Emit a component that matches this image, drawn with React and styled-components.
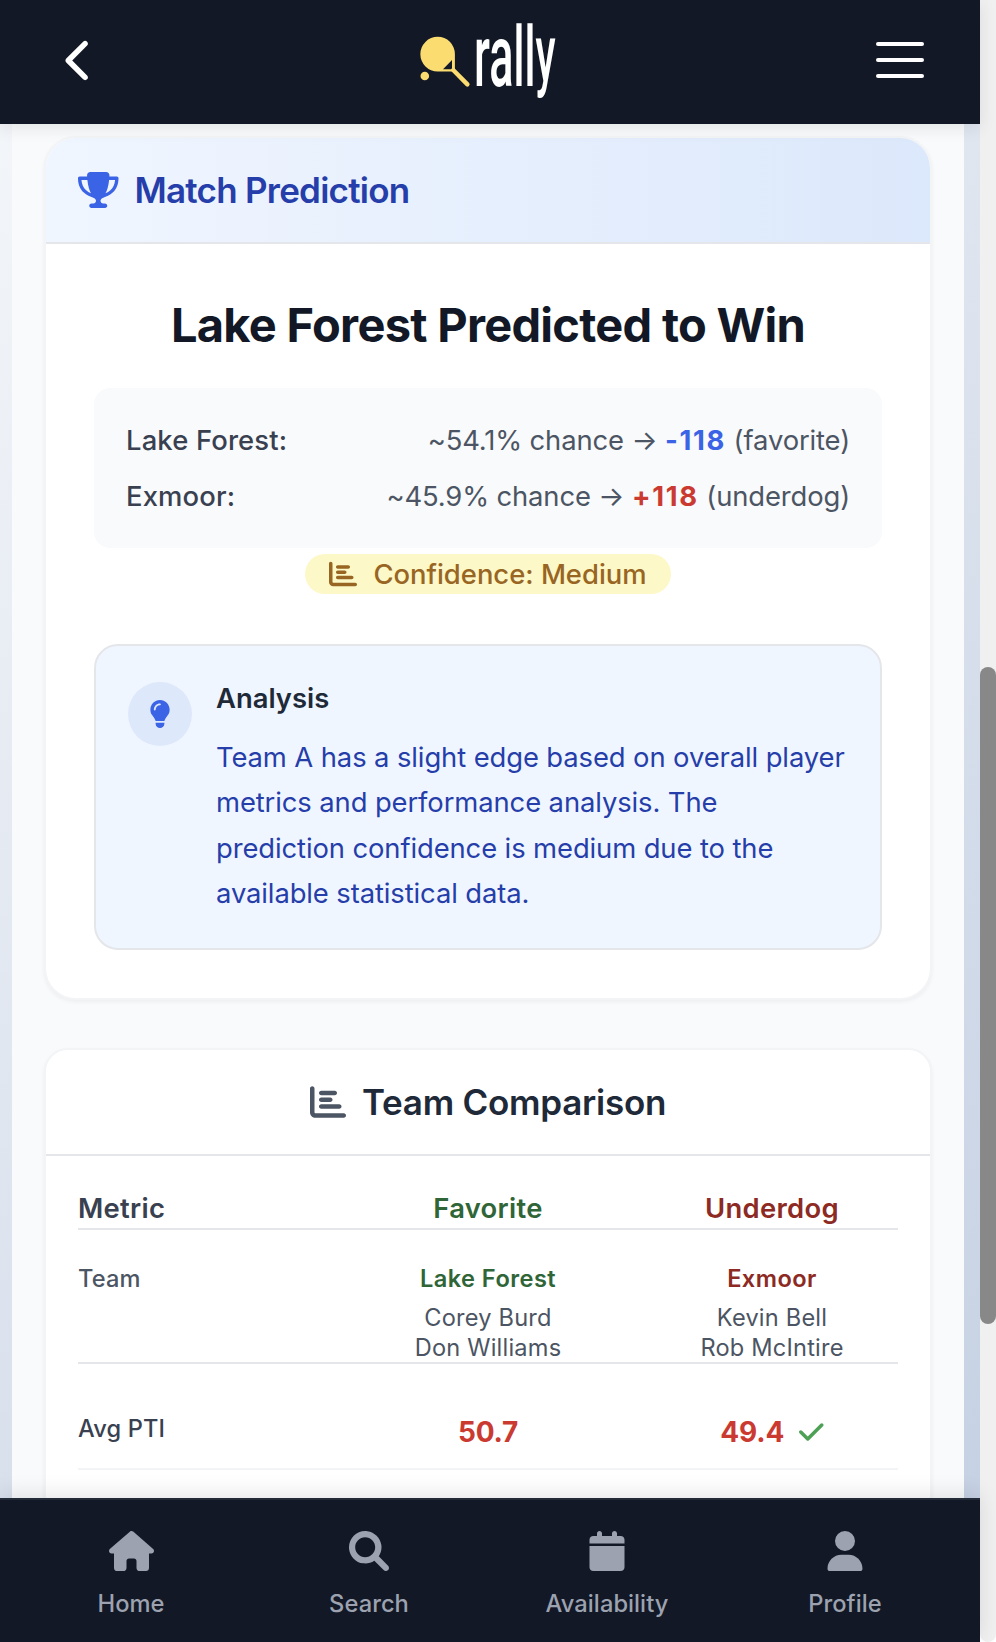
import React from 'react';
import styled, { createGlobalStyle } from 'styled-components';
import {
  FaCalendar,
  FaChartBar,
  FaCheck,
  FaChevronLeft,
  FaHouse,
  FaLightbulb,
  FaTrophy,
  FaUser,
} from 'react-icons/fa6';

const GlobalStyle = createGlobalStyle`
  *, *::before, *::after { box-sizing: border-box; }
  body {
    margin: 0;
    background: #fff;
    font-family: Inter, "Liberation Sans", sans-serif;
    color: #4c5563;
  }
  h1, h2, h3, p { margin: 0; }
  svg { display: block; flex: none; }
`;

const tones = {
  favorite: '#2f6537',
  underdog: '#8c2a23',
  metric: '#394151',
};

const Screen = styled.div`
  display: flex;
  width: 996px;
  height: 1642px;
  overflow: hidden;
`;

const Viewport = styled.div`
  display: flex;
  flex-direction: column;
  width: 980px;
  height: 100%;
  background: linear-gradient(135deg, #f5f7fa 0%, #c3cfe2 100%);
`;

const ScrollTrack = styled.div`
  width: 16px;
  height: 100%;
  padding-top: 667px;
  background: #f0f0f0;
  border-radius: 0 0 8px 8px;
`;

const ScrollThumb = styled.div`
  height: 657px;
  border-radius: 8px;
  background: #888;
`;

const TopBar = styled.header`
  position: relative;
  z-index: 1;
  flex: none;
  display: grid;
  grid-template-columns: 1fr auto 1fr;
  align-items: center;
  height: 124px;
  padding: 0 56px 4px;
  background: #121826;
  box-shadow: 0 4px 16px rgba(0, 0, 0, 0.09);
`;

const BackButton = styled.button`
  justify-self: start;
  padding: 0 0 0 1px;
  border: 0;
  background: none;
  color: #fff;
  font-size: 45px;
`;

const MenuButton = styled.button`
  justify-self: end;
  display: flex;
  flex-direction: column;
  gap: 12px;
  width: 48px;
  padding: 0;
  border: 0;
  background: none;
`;

const MenuLine = styled.span`
  height: 4px;
  border-radius: 2px;
  background: #fff;
`;

const Content = styled.main`
  flex: 1;
  min-height: 0;
  overflow: hidden;
  display: flex;
  flex-direction: column;
  gap: 48px;
  margin: 0 16px 0 12px;
  padding: 12px 32px 0;
  background: #f9fafc;
`;

const Card = styled.section`
  flex: none;
  overflow: hidden;
  background: #fff;
  border: 2px solid #f3f4f6;
  border-radius: ${(p) => p.$radius}px;
  box-shadow: 0 2px 4px rgba(0, 0, 0, 0.05);
`;

const CardHeader = styled.div`
  display: flex;
  align-items: center;
  justify-content: ${(p) => (p.$centered ? 'center' : 'flex-start')};
  gap: 16px;
  height: 106px;
  padding: 0 32px;
  border-bottom: 2px solid #e4e6ea;
  background: ${(p) => (p.$tinted ? 'linear-gradient(90deg, #f0f6ff, #dce8fb)' : '#fff')};
  color: ${(p) => (p.$tinted ? '#3b63e6' : '#4c5563')};
  font-size: 36px;
`;

const TrophyIcon = styled(FaTrophy)`
  width: 1.125em;
`;

const CardTitle = styled.h2`
  font-size: 35px;
  font-weight: 600;
  line-height: 40px;
  letter-spacing: ${(p) => (p.$tinted ? '-0.76px' : '-0.26px')};
  color: ${(p) => (p.$tinted ? '#263ea9' : '#202938')};
`;

const PredictionBody = styled.div`
  padding: 49px 48px 48px;
`;

const Headline = styled.h1`
  margin-bottom: 31px;
  text-align: center;
  font-size: 47px;
  font-weight: 700;
  line-height: 64px;
  letter-spacing: -0.72px;
  white-space: nowrap;
  color: #121826;
`;

const OddsPanel = styled.div`
  display: flex;
  flex-direction: column;
  gap: 16px;
  padding: 32px;
  border-radius: 16px;
  background: #f9fafc;
`;

const OddsRow = styled.div`
  display: flex;
  justify-content: space-between;
  font-size: 27.4px;
  line-height: 40px;
  white-space: nowrap;
`;

const OddsTeam = styled.span`
  font-weight: 500;
  letter-spacing: 0.15px;
  color: #394151;
`;

const OddsText = styled.span`
  letter-spacing: -0.13px;
`;

const MoneyLine = styled.strong`
  font-weight: 700;
  letter-spacing: 1.7px;
  color: ${(p) => (p.$favored ? '#3b63e6' : '#cb3a30')};
`;

const BadgeRow = styled.div`
  display: flex;
  justify-content: center;
  padding: 6px 0 50px;
`;

const Badge = styled.div`
  display: flex;
  align-items: center;
  gap: 16px;
  height: 40px;
  padding: 0 24px;
  border-radius: 20px;
  background: #fdf8c7;
  color: #986523;
  font-size: 28px;
`;

const BadgeLabel = styled.span`
  font-size: 27.4px;
  font-weight: 500;
  white-space: nowrap;
`;

const AnalysisPanel = styled.div`
  display: flex;
  align-items: flex-start;
  gap: 24px;
  height: 306px;
  padding: 32px;
  border: 2px solid #e4e6ea;
  border-radius: 24px;
  background: #f0f6ff;
`;

const AnalysisIcon = styled.div`
  flex: none;
  display: flex;
  align-items: center;
  justify-content: center;
  width: 64px;
  height: 64px;
  margin-top: 4px;
  border-radius: 50%;
  background: #dde8fb;
  color: #3b63e6;
  font-size: 28px;
`;

const AnalysisTitle = styled.h3`
  margin-bottom: 16.5px;
  font-size: 27.4px;
  font-weight: 600;
  line-height: 40px;
  color: #202938;
`;

const AnalysisText = styled.p`
  font-size: 27.4px;
  line-height: 45.5px;
  letter-spacing: -0.1px;
  color: #263ea9;
`;

const Comparison = styled.div`
  padding: 32px 32px 96px;
`;

const CompareRow = styled.div`
  display: grid;
  grid-template-columns: repeat(3, 252px);
  column-gap: 32px;
  padding: ${(p) => p.$pad || '0'};
  border-bottom: 2px solid ${(p) => (p.$faint ? '#f3f4f6' : '#e4e6ea')};
`;

const ColumnTitle = styled.div`
  font-size: 27.4px;
  font-weight: 600;
  line-height: 40px;
  letter-spacing: 0.3px;
  text-align: ${(p) => (p.$tone === 'metric' ? 'left' : 'center')};
  color: ${(p) => tones[p.$tone]};
`;

const MetricLabel = styled.div`
  padding-top: 1px;
  font-size: 23.6px;
  font-weight: 500;
  line-height: 32px;
  letter-spacing: 0.12px;
  color: ${(p) => (p.$strong ? '#394151' : '#4c5563')};
`;

const TeamCell = styled.div`
  padding-top: 1px;
  margin-bottom: -1px;
  text-align: center;
`;

const TeamName = styled.div`
  margin-bottom: 8px;
  font-size: 23.6px;
  font-weight: 600;
  line-height: 32px;
  letter-spacing: 0.45px;
  color: ${(p) => tones[p.$tone]};
`;

const PlayerName = styled.div`
  font-size: 23.6px;
  line-height: 30px;
  letter-spacing: 0.2px;
`;

const Score = styled.div`
  display: flex;
  align-items: center;
  justify-content: center;
  gap: 15px;
  font-size: 28px;
  font-weight: 700;
  line-height: 40px;
  letter-spacing: -0.2px;
  color: #cb3a30;
`;

const WinMark = styled(FaCheck)`
  width: 0.875em;
  color: #4ca154;
`;

const TabBar = styled.nav`
  position: relative;
  z-index: 1;
  flex: none;
  display: grid;
  grid-template-columns: repeat(4, 1fr);
  height: 144px;
  padding: 31px 16px 0 12px;
  border-top: 2px solid #232b38;
  background: #121826;
  box-shadow: 0 -4px 20px rgba(0, 0, 0, 0.1);
`;

const Tab = styled.a`
  display: flex;
  flex-direction: column;
  align-items: center;
  gap: 17px;
  color: #9ca2af;
  font-size: 40px;
`;

const HomeIcon = styled(FaHouse)`
  width: 1.125em;
`;

const TabLabel = styled.span`
  font-size: 23.7px;
  font-weight: 500;
  line-height: 32px;
  letter-spacing: 0.05px;
`;

const Wordmark = styled.text`
  font-family: Roboto, "Liberation Sans", sans-serif;
  font-size: 84px;
  font-weight: 500;
  fill: #fff;
`;

function RallyLogo() {
  return (
    <svg width="148" height="120" viewBox="416 0 148 120" role="img" aria-label="rally">
      <g fill="#fadc70">
        <path
          fillRule="evenodd"
          d="M437.7 36.8A17.2 17.2 0 0 1 454.9 54V69.6L453 71.5H437.7A17.3 17.3 0 0 1 437.7 36.8ZM452 60L443 69.2H452Z"
        />
        <circle cx="424.8" cy="76" r="4.3" />
      </g>
      <path d="M453.2 70L467.4 84.4" stroke="#fadc70" strokeWidth="4.4" strokeLinecap="round" />
      <Wordmark transform="translate(474.1 85.7) scale(0.512 1)">
        <tspan fontSize="88">ra</tspan>
        <tspan>ll</tspan>
        <tspan fontSize="80" dy="-4.5">y</tspan>
      </Wordmark>
    </svg>
  );
}

function SearchIcon() {
  return (
    <svg width="1em" height="1em" viewBox="0 0 512 512" fill="currentColor">
      <path d="M500.3 443.7l-119.7-119.7c27.22-40.41 40.65-90.9 33.46-144.7C401.8 87.79 326.8 13.32 235.2 1.723C99.01-15.51-15.51 99.01 1.724 235.2c11.6 91.64 86.08 166.7 177.6 178.9c53.8 7.189 104.3-6.236 144.7-33.46l119.7 119.7c15.62 15.62 40.95 15.62 56.57 0C515.9 484.7 515.9 459.3 500.3 443.7zM79.1 208c0-70.58 57.42-128 128-128s128 57.42 128 128c0 70.58-57.42 128-128 128S79.1 278.6 79.1 208z" />
    </svg>
  );
}

const odds = [
  { team: 'Lake Forest:', chance: '~54.1% chance', line: '-118', role: '(favorite)', favored: true },
  { team: 'Exmoor:', chance: '~45.9% chance', line: '+118', role: '(underdog)', favored: false },
];

const teams = [
  { name: 'Lake Forest', tone: 'favorite', players: ['Corey Burd', 'Don Williams'] },
  { name: 'Exmoor', tone: 'underdog', players: ['Kevin Bell', 'Rob McIntire'] },
];

const tabs = [
  { label: 'Home', icon: HomeIcon },
  { label: 'Search', icon: SearchIcon },
  { label: 'Availability', icon: FaCalendar },
  { label: 'Profile', icon: FaUser },
];

export default function App() {
  return (
    <Screen>
      <GlobalStyle />
      <Viewport>
        <TopBar>
          <BackButton aria-label="Back">
            <FaChevronLeft />
          </BackButton>
          <RallyLogo />
          <MenuButton aria-label="Menu">
            <MenuLine />
            <MenuLine />
            <MenuLine />
          </MenuButton>
        </TopBar>

        <Content>
          <Card $radius={32}>
            <CardHeader $tinted>
              <TrophyIcon />
              <CardTitle $tinted>Match Prediction</CardTitle>
            </CardHeader>
            <PredictionBody>
              <Headline>Lake Forest Predicted to Win</Headline>
              <OddsPanel>
                {odds.map((o) => (
                  <OddsRow key={o.team}>
                    <OddsTeam>{o.team}</OddsTeam>
                    <OddsText>
                      {o.chance} → <MoneyLine $favored={o.favored}>{o.line}</MoneyLine> {o.role}
                    </OddsText>
                  </OddsRow>
                ))}
              </OddsPanel>
              <BadgeRow>
                <Badge>
                  <FaChartBar />
                  <BadgeLabel>Confidence: Medium</BadgeLabel>
                </Badge>
              </BadgeRow>
              <AnalysisPanel>
                <AnalysisIcon>
                  <FaLightbulb />
                </AnalysisIcon>
                <div>
                  <AnalysisTitle>Analysis</AnalysisTitle>
                  <AnalysisText>
                    Team A has a slight edge based on overall player metrics and performance
                    analysis. The prediction confidence is medium due to the available statistical
                    data.
                  </AnalysisText>
                </div>
              </AnalysisPanel>
            </PredictionBody>
          </Card>

          <Card $radius={24}>
            <CardHeader $centered>
              <FaChartBar />
              <CardTitle>Team Comparison</CardTitle>
            </CardHeader>
            <Comparison>
              <CompareRow>
                <ColumnTitle $tone="metric">Metric</ColumnTitle>
                <ColumnTitle $tone="favorite">Favorite</ColumnTitle>
                <ColumnTitle $tone="underdog">Underdog</ColumnTitle>
              </CompareRow>
              <CompareRow $pad="32px 0 0">
                <MetricLabel>Team</MetricLabel>
                {teams.map((t) => (
                  <TeamCell key={t.name}>
                    <TeamName $tone={t.tone}>{t.name}</TeamName>
                    {t.players.map((p) => (
                      <PlayerName key={p}>{p}</PlayerName>
                    ))}
                  </TeamCell>
                ))}
              </CompareRow>
              <CompareRow $pad="48px 0 16px" $faint>
                <MetricLabel $strong>Avg PTI</MetricLabel>
                <Score>50.7</Score>
                <Score>
                  49.4
                  <WinMark />
                </Score>
              </CompareRow>
            </Comparison>
          </Card>
        </Content>

        <TabBar>
          {tabs.map(({ label, icon: Icon }) => (
            <Tab key={label}>
              <Icon />
              <TabLabel>{label}</TabLabel>
            </Tab>
          ))}
        </TabBar>
      </Viewport>
      <ScrollTrack>
        <ScrollThumb />
      </ScrollTrack>
    </Screen>
  );
}
